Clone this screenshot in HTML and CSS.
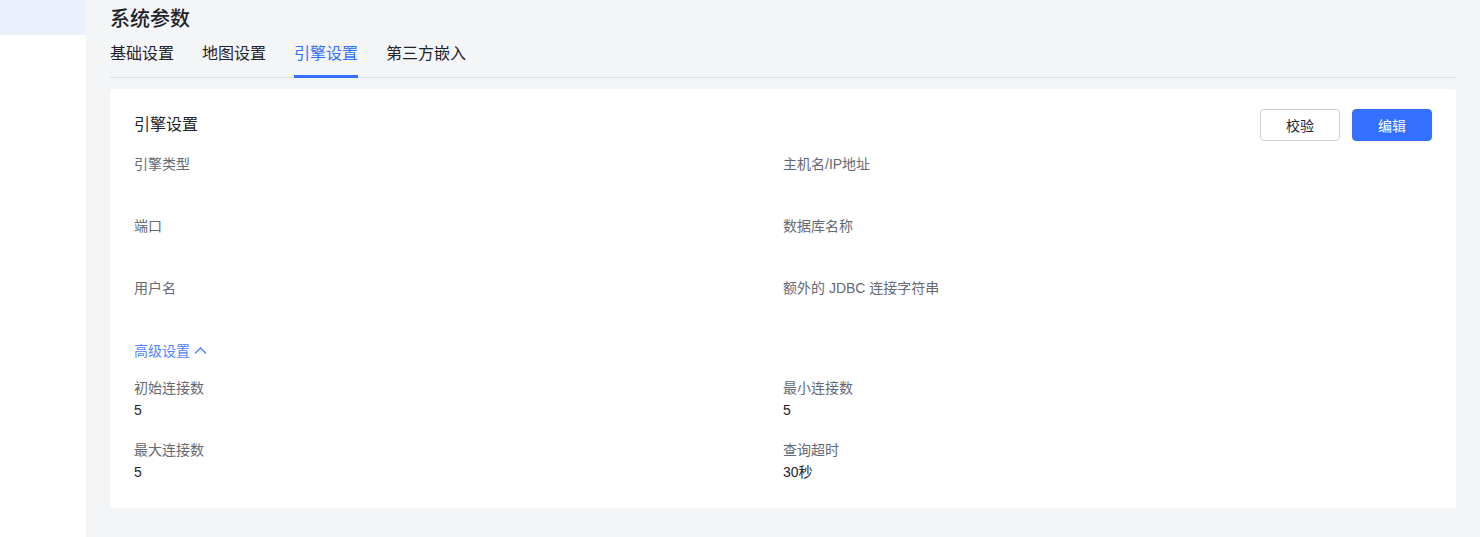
FILE: index.html
```html
<!DOCTYPE html>
<html lang="zh-CN">
<head>
    <meta charset="UTF-8">
    <title>系统参数</title>
    <link rel="stylesheet" href="styles.css">
</head>
<body>
<div class="layout">
    <div class="side">
        <div class="side-item active"></div>
    </div>
    <div class="main">
        <h1 class="page-title">系统参数</h1>
        <ul class="tabs">
            <li>基础设置</li>
            <li>地图设置</li>
            <li class="current">引擎设置</li>
            <li>第三方嵌入</li>
        </ul>
        <div class="card">
            <div class="card-head">
                <span class="card-title">引擎设置</span>
                <div class="btns">
                    <button class="btn">校验</button>
                    <button class="btn primary">编辑</button>
                </div>
            </div>
            <div class="fields">
                <div class="field"><div class="label">引擎类型</div><div class="value"></div></div>
                <div class="field"><div class="label">主机名/IP地址</div><div class="value"></div></div>
                <div class="field"><div class="label">端口</div><div class="value"></div></div>
                <div class="field"><div class="label">数据库名称</div><div class="value"></div></div>
                <div class="field"><div class="label">用户名</div><div class="value"></div></div>
                <div class="field"><div class="label">额外的 JDBC 连接字符串</div><div class="value"></div></div>
            </div>
            <div class="advanced">
                高级设置
                <svg width="13" height="12" viewBox="0 0 13 12"><path d="M1 8.5 6.5 3l5.5 5.5" fill="none" stroke="currentColor" stroke-width="1.3"/></svg>
            </div>
            <div class="fields more">
                <div class="field"><div class="label">初始连接数</div><div class="value">5</div></div>
                <div class="field"><div class="label">最小连接数</div><div class="value">5</div></div>
                <div class="field"><div class="label">最大连接数</div><div class="value">5</div></div>
                <div class="field"><div class="label">查询超时</div><div class="value">30秒</div></div>
            </div>
        </div>
    </div>
</div>
</body>
</html>
```

FILE: styles.css
```css
* {
    margin: 0;
    padding: 0;
    list-style: none;
    box-sizing: border-box;
}

body {
    font-family: "Liberation Sans", "Noto Sans CJK SC", sans-serif;
    color: #1f2329;
    background: #f4f5f7;
}

.layout {
    display: flex;
    min-height: 537px;
}

.side {
    width: 86px;
    flex: none;
    background: #fff;
}

.side-item {
    height: 35px;
}

.side-item.active {
    background: #eaf1fc;
}

.main {
    flex: 1;
    padding: 5px 24px 0 24px;
}

.page-title {
    font-size: 20px;
    line-height: 28px;
    font-weight: 500;
    color: #1f2329;
}

.tabs {
    display: flex;
    gap: 28px;
    margin-top: 8px;
    border-bottom: 1px solid #dee0e3;
}

.tabs li {
    font-size: 16px;
    line-height: 24px;
    padding-top: 1px;
    padding-bottom: 9px;
    border-bottom: 3px solid transparent;
    margin-bottom: -1px;
    color: #1f2329;
    cursor: pointer;
}

.tabs li.current {
    color: #3370ff;
    border-bottom-color: #3370ff;
}

.card {
    margin-top: 11px;
    background: #fff;
    border-radius: 4px;
    padding: 20px 24px 25px 24px;
}

.card-head {
    display: flex;
    align-items: center;
    justify-content: space-between;
    height: 32px;
    margin-bottom: 12px;
}

.card-title {
    font-size: 16px;
    line-height: 24px;
    color: #1f2329;
}

.btns {
    display: flex;
    gap: 12px;
}

.btn {
    width: 80px;
    height: 32px;
    border: 1px solid #c9cdd4;
    border-radius: 4px;
    background: #fff;
    font-family: inherit;
    font-size: 14px;
    color: #1f2329;
    cursor: pointer;
}

.btn.primary {
    background: #3370ff;
    border-color: #3370ff;
    color: #fff;
}

.fields {
    display: grid;
    grid-template-columns: 1fr 1fr;
    row-gap: 18px;
}

.field {
    font-size: 14px;
    line-height: 22px;
}

.label {
    color: #646a73;
}

.value {
    min-height: 22px;
    color: #1f2329;
}

.advanced {
    margin-top: 19px;
    display: flex;
    align-items: center;
    gap: 4px;
    font-size: 14px;
    line-height: 22px;
    color: #4e83fd;
    cursor: pointer;
}

.fields.more {
    margin-top: 15px;
}
```
